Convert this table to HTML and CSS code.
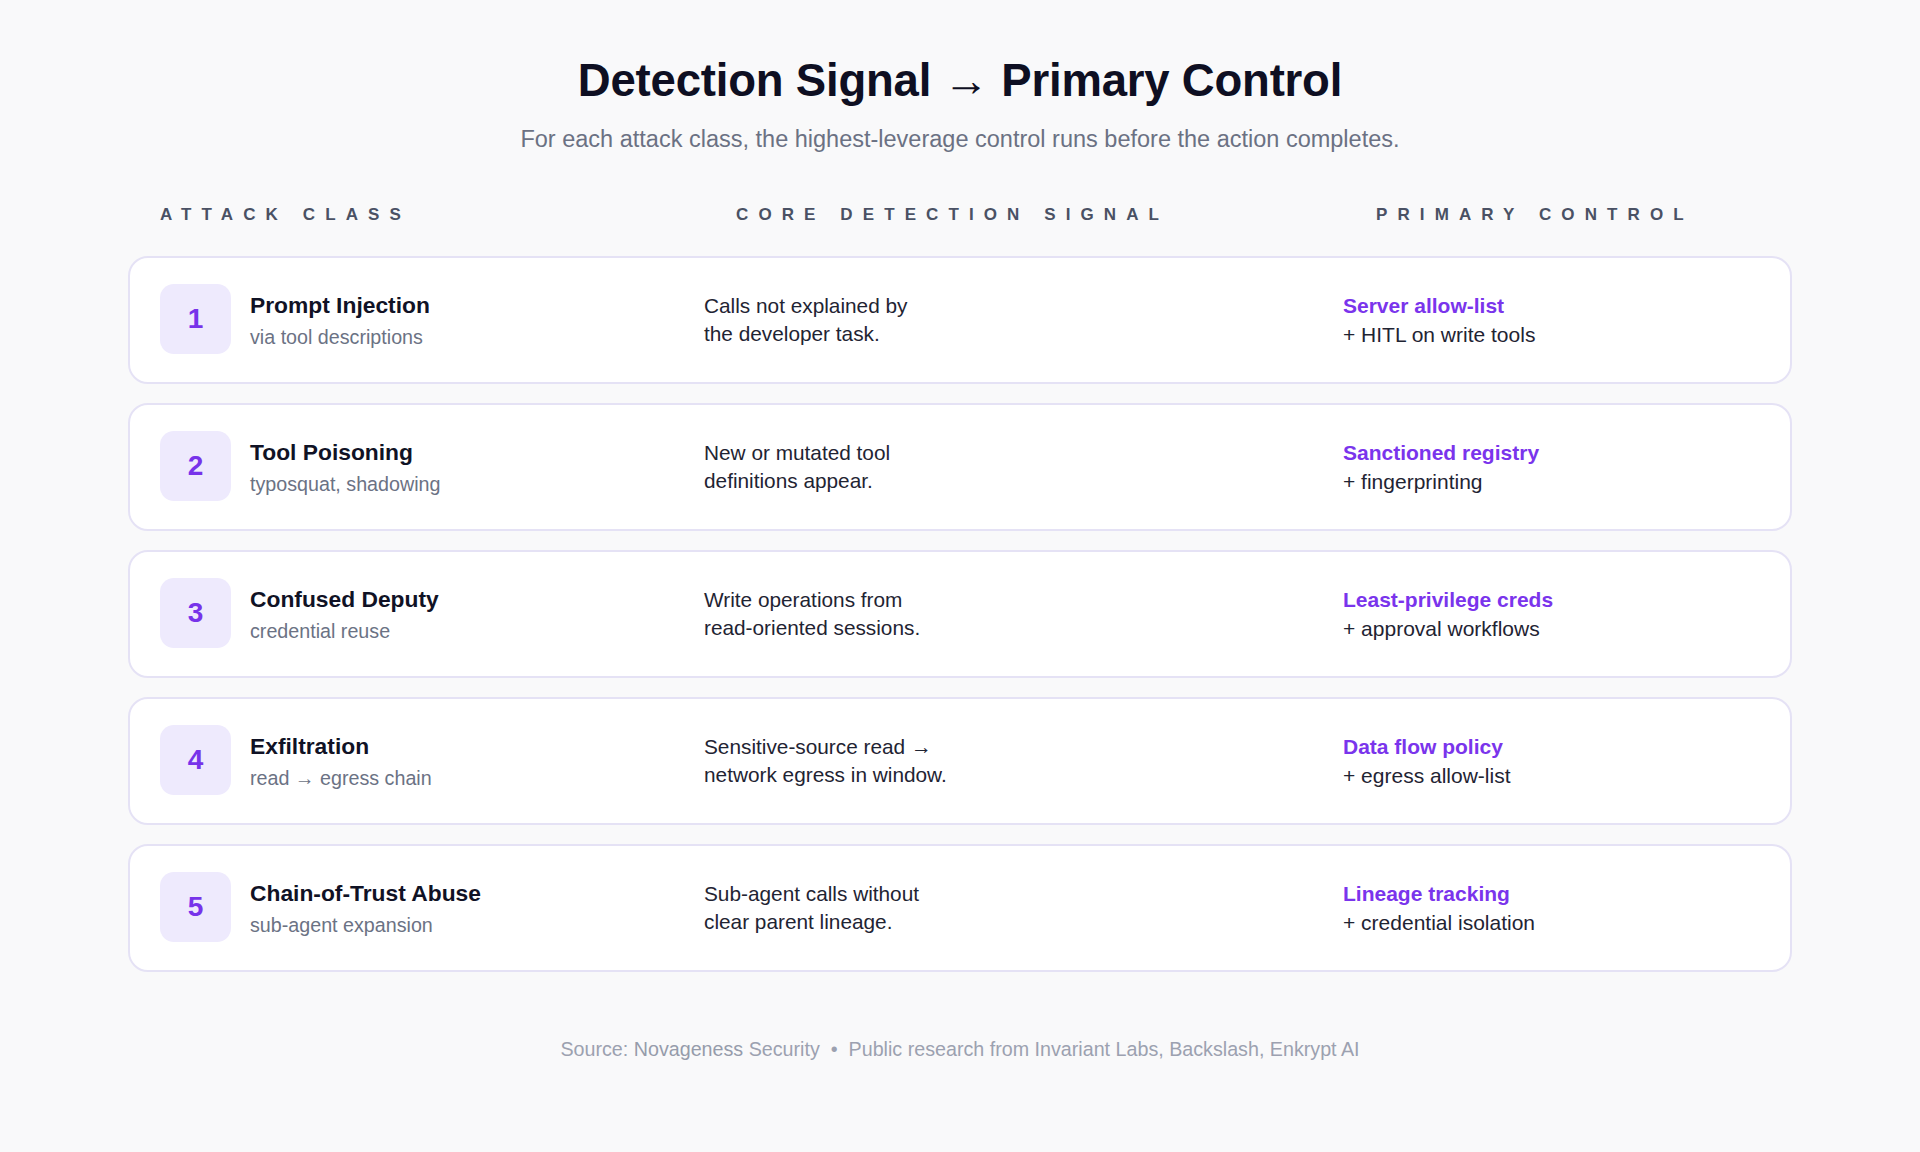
FILE: index.html
```html
<!DOCTYPE html>
<html lang="en">
<head>
<meta charset="utf-8">
<title>Detection Signal → Primary Control</title>
<link rel="stylesheet" href="styles.css">
</head>
<body>
<main class="page">
  <header class="hero">
    <h1 class="title">Detection Signal → Primary Control</h1>
    <p class="subtitle">For each attack class, the highest-leverage control runs before the action completes.</p>
  </header>

  <div class="col-heads">
    <div class="col-head">ATTACK CLASS</div>
    <div class="col-head">CORE DETECTION SIGNAL</div>
    <div class="col-head">PRIMARY CONTROL</div>
  </div>

  <section class="rows">
    <article class="row">
      <div class="attack">
        <div class="badge">1</div>
        <div class="attack-text">
          <div class="attack-name">Prompt Injection</div>
          <div class="attack-sub">via tool descriptions</div>
        </div>
      </div>
      <div class="signal">Calls not explained by<br>the developer task.</div>
      <div class="control"><div class="control-main">Server allow-list</div><div class="control-extra">+ HITL on write tools</div></div>
    </article>

    <article class="row">
      <div class="attack">
        <div class="badge">2</div>
        <div class="attack-text">
          <div class="attack-name">Tool Poisoning</div>
          <div class="attack-sub">typosquat, shadowing</div>
        </div>
      </div>
      <div class="signal">New or mutated tool<br>definitions appear.</div>
      <div class="control"><div class="control-main">Sanctioned registry</div><div class="control-extra">+ fingerprinting</div></div>
    </article>

    <article class="row">
      <div class="attack">
        <div class="badge">3</div>
        <div class="attack-text">
          <div class="attack-name">Confused Deputy</div>
          <div class="attack-sub">credential reuse</div>
        </div>
      </div>
      <div class="signal">Write operations from<br>read-oriented sessions.</div>
      <div class="control"><div class="control-main">Least-privilege creds</div><div class="control-extra">+ approval workflows</div></div>
    </article>

    <article class="row">
      <div class="attack">
        <div class="badge">4</div>
        <div class="attack-text">
          <div class="attack-name">Exfiltration</div>
          <div class="attack-sub">read → egress chain</div>
        </div>
      </div>
      <div class="signal">Sensitive-source read →<br>network egress in window.</div>
      <div class="control"><div class="control-main">Data flow policy</div><div class="control-extra">+ egress allow-list</div></div>
    </article>

    <article class="row">
      <div class="attack">
        <div class="badge">5</div>
        <div class="attack-text">
          <div class="attack-name">Chain-of-Trust Abuse</div>
          <div class="attack-sub">sub-agent expansion</div>
        </div>
      </div>
      <div class="signal">Sub-agent calls without<br>clear parent lineage.</div>
      <div class="control"><div class="control-main">Lineage tracking</div><div class="control-extra">+ credential isolation</div></div>
    </article>
  </section>

  <footer class="footer">Source: <span class="brand">Novageness</span> Security &nbsp;•&nbsp; Public research from Invariant Labs, Backslash, Enkrypt AI</footer>
</main>
</body>
</html>
```

FILE: styles.css
```css
* { box-sizing: border-box; }

html, body {
  margin: 0;
  padding: 0;
  background: #f9f9fa;
}

body {
  font-family: "Liberation Sans", Arial, Helvetica, sans-serif;
  color: #1f2433;
  width: 1920px;
  height: 1152px;
  overflow: hidden;
}

.page {
  width: 1664px;
  margin: 0 auto;
  padding-top: 56px;
}

.hero {
  text-align: center;
}

.title {
  margin: 0;
  font-size: 45.5px;
  line-height: 50px;
  font-weight: 700;
  color: #0e0f22;
  letter-spacing: -0.2px;
}

.subtitle {
  margin: 19px 0 0;
  font-size: 23.5px;
  line-height: 28px;
  color: #6b7183;
}

.col-heads {
  display: grid;
  grid-template-columns: 576px 640px 1fr;
  padding-left: 32px;
  margin-top: 52px;
}

.col-head {
  font-size: 17px;
  line-height: 20px;
  font-weight: 700;
  letter-spacing: 10.1px;
  color: #4a5164;
}

.rows {
  display: flex;
  flex-direction: column;
  gap: 19px;
  margin-top: 31px;
}

.row {
  height: 128px;
  background: #ffffff;
  border: 2px solid #e5e2f5;
  border-radius: 20px;
  padding: 0 30px;
  display: grid;
  grid-template-columns: 544px 639px 1fr;
  align-items: center;
}

.attack {
  display: flex;
  align-items: center;
  gap: 19px;
}

.badge {
  width: 71px;
  height: 70px;
  border-radius: 14px;
  background: #eeeafd;
  color: #7733ea;
  font-size: 28px;
  font-weight: 700;
  display: flex;
  align-items: center;
  justify-content: center;
  margin-top: -2px;
}

.attack-name {
  font-size: 22.8px;
  line-height: 28px;
  font-weight: 700;
  color: #101225;
}

.attack-sub {
  margin-top: 5px;
  font-size: 19.7px;
  line-height: 26px;
  color: #6b7284;
}

.signal {
  font-size: 20.8px;
  line-height: 28px;
  color: #1f2433;
}

.control {
  font-size: 21px;
  line-height: 29px;
}

.control-main {
  font-weight: 700;
  color: #7a34ec;
}

.control-extra {
  color: #1f2433;
}

.footer {
  margin-top: 66px;
  text-align: center;
  font-size: 19.7px;
  line-height: 22px;
  color: #9ca1b0;
}

.brand {
  color: #969cab;
}
```
